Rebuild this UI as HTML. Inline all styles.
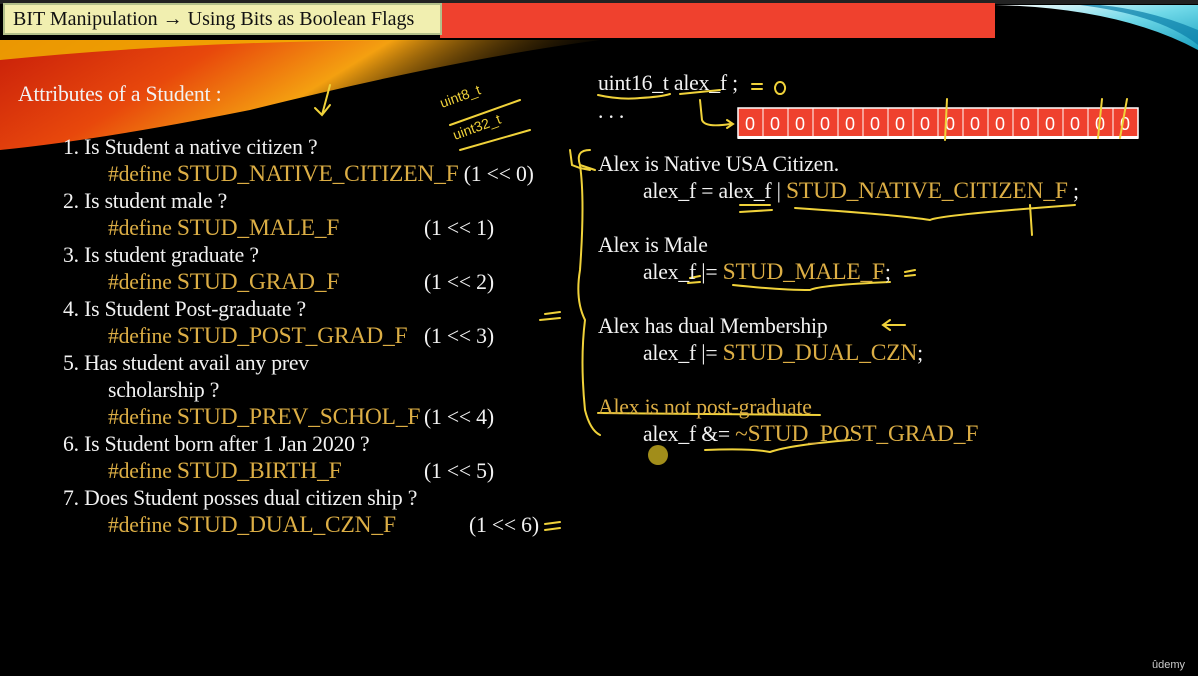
<!DOCTYPE html>
<html><head><meta charset="utf-8"><style>
body{margin:0;width:1198px;height:669px;background:#000;overflow:hidden;position:relative;font-family:"Liberation Serif",serif;color:#f2f2f2}
.t{position:absolute;font-size:21.7px;white-space:nowrap;line-height:22px;letter-spacing:-0.2px}
.g{color:#dcae45}
.s{font-size:23.5px}
</style></head><body>
<svg width="1198" height="669" style="position:absolute;left:0;top:0">
<defs>
<linearGradient id="sw" x1="0" y1="0" x2="1" y2="0.3">
<stop offset="0" stop-color="#c81e0a"/><stop offset="0.35" stop-color="#e8480c"/><stop offset="0.6" stop-color="#f4a010"/><stop offset="1" stop-color="#000" stop-opacity="0"/>
</linearGradient>
<linearGradient id="bl" x1="0" y1="0" x2="1" y2="1"><stop offset="0" stop-color="#ffffff"/><stop offset="0.5" stop-color="#6fd8e8"/><stop offset="1" stop-color="#1aa0c0"/></linearGradient>
</defs>
<path d="M0 40 L600 40 Q450 60 250 110 Q100 140 0 150 Z" fill="url(#sw)"/>
<path d="M0 60 Q200 40 430 40 L0 40Z" fill="#f2b500" opacity=".8"/>
<rect x="0" y="0" width="1198" height="4" fill="#222"/>
<rect x="440" y="3" width="555" height="35" fill="#ef412e"/>
<path d="M995 5 Q1120 8 1198 50 L1198 5 Z" fill="url(#bl)"/>
<path d="M1080 5 Q1160 15 1198 45 L1198 30 Q1150 10 1100 5Z" fill="#0a7ea8" opacity=".7"/>
<rect x="4" y="4" width="437" height="30" fill="#f1efb0" stroke="#b3c08a" stroke-width="2"/>
<rect x="738" y="108" width="400" height="30" fill="#ef412e" stroke="#fff" stroke-width="1.5"/>
<g stroke="#fff" stroke-width="1">
<line x1="763" y1="108" x2="763" y2="136"/><line x1="788" y1="108" x2="788" y2="136"/><line x1="813" y1="108" x2="813" y2="136"/><line x1="838" y1="108" x2="838" y2="136"/><line x1="863" y1="108" x2="863" y2="136"/><line x1="888" y1="108" x2="888" y2="136"/><line x1="913" y1="108" x2="913" y2="136"/><line x1="938" y1="108" x2="938" y2="136"/><line x1="963" y1="108" x2="963" y2="136"/><line x1="988" y1="108" x2="988" y2="136"/><line x1="1013" y1="108" x2="1013" y2="136"/><line x1="1038" y1="108" x2="1038" y2="136"/><line x1="1063" y1="108" x2="1063" y2="136"/><line x1="1088" y1="108" x2="1088" y2="136"/><line x1="1113" y1="108" x2="1113" y2="136"/>
</g>
<rect x="738" y="136" width="400" height="3" fill="#fff"/>
<g font-family="Liberation Sans" font-size="18" fill="#fff" text-anchor="middle">
<text x="750" y="130">0</text><text x="775" y="130">0</text><text x="800" y="130">0</text><text x="825" y="130">0</text><text x="850" y="130">0</text><text x="875" y="130">0</text><text x="900" y="130">0</text><text x="925" y="130">0</text><text x="950" y="130">0</text><text x="975" y="130">0</text><text x="1000" y="130">0</text><text x="1025" y="130">0</text><text x="1050" y="130">0</text><text x="1075" y="130">0</text><text x="1100" y="130">0</text><text x="1125" y="130">0</text>
</g>
<g stroke="#f0d23a" stroke-width="2" fill="none" stroke-linecap="round">
<path d="M330 85 L322 115 M315 108 L322 115 L330 105"/>
<path d="M450 125 L520 100 M460 150 L530 130"/>
<path d="M598 95 Q620 100 640 98 Q660 97 670 94 M680 94 L720 90"/>
<path d="M700 100 L702 120 Q705 128 730 124 M727 120 L733 124 L727 128"/>
<path d="M590 150 Q575 150 580 165 Q585 200 580 270 Q575 300 585 320 Q580 360 585 410 Q590 430 600 435"/>
<path d="M570 150 L572 165 L580 168 L590 170 M580 165 L595 170"/>
<path d="M947 99 L945 140 M1102 99 L1098 138 M1127 99 L1120 138"/>
<path d="M795 208 Q900 215 930 220 Q940 215 1075 205 M1030 205 L1032 235"/>
<path d="M733 285 Q780 290 810 290 Q820 285 890 282 M905 272 L915 270 M905 276 L915 275"/>
<path d="M885 325 L905 325 M890 320 L883 325 L890 330"/>
<path d="M705 450 Q750 448 770 452 Q790 445 850 440 M598 413 L820 415"/>
<path d="M540 320 L560 318 M545 314 L560 312 M545 524 L560 522 M545 530 L560 528"/>
<path d="M740 205 L770 205 M740 212 L772 210 M690 278 L700 276 M688 283 L700 282"/>
<path d="M752 84 L762 84 M752 89 L762 89 M780 82 a5 6 0 1 0 0.1 0"/>
</g>
<g fill="#f0d23a" font-family="Liberation Sans" font-size="14" >
<text x="442" y="108" transform="rotate(-20 442 108)">uint8_t</text>
<text x="455" y="140" transform="rotate(-20 455 140)">uint32_t</text>
</g>
<circle cx="658" cy="455" r="10" fill="#c9b020" opacity=".8"/>
</svg>
<div class="t" style="left:13px;top:8px;color:#111;font-size:20px;letter-spacing:0">BIT Manipulation → Using Bits as Boolean Flags</div>
<div class="t" style="left:18px;top:83px">Attributes of a Student :</div>
<div class="t" style="left:63px;top:136px">1. Is Student a native citizen ?</div>
<div class="t" style="left:108px;top:163px"><span class="g">#define </span><span class="g s">STUD_NATIVE_CITIZEN_F</span> (1 &lt;&lt; 0)</div>
<div class="t" style="left:63px;top:190px">2. Is student male ?</div>
<div class="t" style="left:108px;top:217px"><span class="g">#define </span><span class="g s">STUD_MALE_F</span></div><div class="t" style="left:424px;top:217px">(1 &lt;&lt; 1)</div>
<div class="t" style="left:63px;top:244px">3. Is student graduate ?</div>
<div class="t" style="left:108px;top:271px"><span class="g">#define </span><span class="g s">STUD_GRAD_F</span></div><div class="t" style="left:424px;top:271px">(1 &lt;&lt; 2)</div>
<div class="t" style="left:63px;top:298px">4. Is Student Post-graduate ?</div>
<div class="t" style="left:108px;top:325px"><span class="g">#define </span><span class="g s">STUD_POST_GRAD_F</span></div><div class="t" style="left:424px;top:325px">(1 &lt;&lt; 3)</div>
<div class="t" style="left:63px;top:352px">5. Has student avail any prev</div>
<div class="t" style="left:108px;top:379px">scholarship ?</div>
<div class="t" style="left:108px;top:406px"><span class="g">#define </span><span class="g s">STUD_PREV_SCHOL_F</span></div><div class="t" style="left:424px;top:406px">(1 &lt;&lt; 4)</div>
<div class="t" style="left:63px;top:433px">6. Is Student born after 1 Jan 2020 ?</div>
<div class="t" style="left:108px;top:460px"><span class="g">#define </span><span class="g s">STUD_BIRTH_F</span></div><div class="t" style="left:424px;top:460px">(1 &lt;&lt; 5)</div>
<div class="t" style="left:63px;top:487px">7. Does Student posses dual citizen ship ?</div>
<div class="t" style="left:108px;top:514px"><span class="g">#define </span><span class="g s">STUD_DUAL_CZN_F</span></div><div class="t" style="left:469px;top:514px">(1 &lt;&lt; 6)</div>
<div class="t" style="left:598px;top:72px">uint16_t alex_f ;</div>
<div class="t" style="left:598px;top:100px">. . .</div>
<div class="t" style="left:598px;top:153px">Alex is Native USA Citizen.</div>
<div class="t" style="left:643px;top:180px">alex_f = alex_f | <span class="g s">STUD_NATIVE_CITIZEN_F</span> ;</div>
<div class="t" style="left:598px;top:234px">Alex is Male</div>
<div class="t" style="left:643px;top:261px">alex_f |= <span class="g s">STUD_MALE_F</span>;</div>
<div class="t" style="left:598px;top:315px">Alex has dual Membership</div>
<div class="t" style="left:643px;top:342px">alex_f |= <span class="g s">STUD_DUAL_CZN</span>;</div>
<div class="t g" style="left:598px;top:396px">Alex is not post-graduate</div>
<div class="t" style="left:643px;top:423px">alex_f &amp;= <span class="g s">~STUD_POST_GRAD_F</span></div>
<div class="t" style="left:1152px;top:654px;font-size:11px;font-family:'Liberation Sans';color:#ccc;letter-spacing:0">ûdemy</div>
</body></html>
